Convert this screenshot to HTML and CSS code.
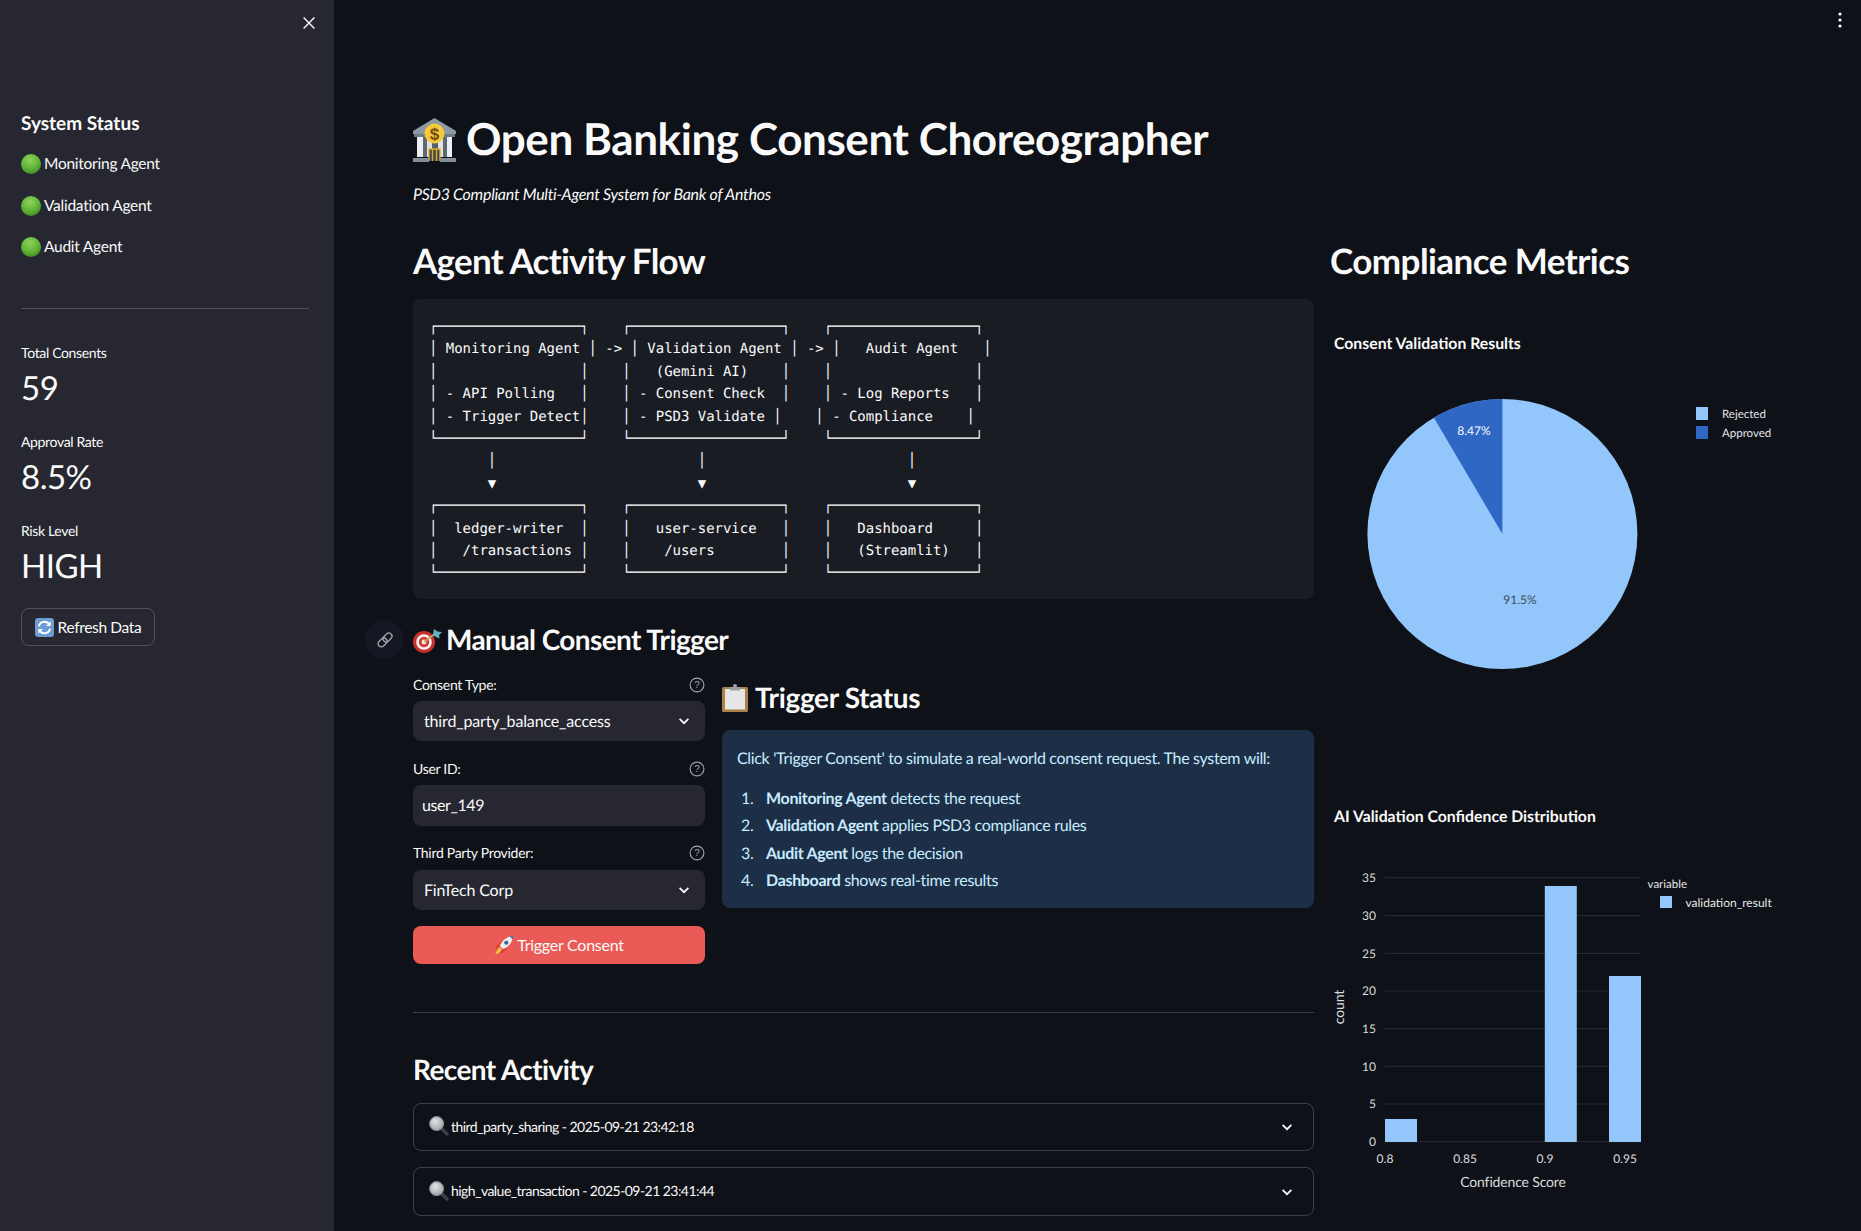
FILE: index.html
```html
<!DOCTYPE html>
<html lang="en">
<head>
  <meta charset="UTF-8">
  <meta name="viewport" content="width=device-width, initial-scale=1.0">
  <link rel="stylesheet" href="styles.css">
  <title>Open Banking Consent Choreographer</title>
</head>
<body>
  <svg class="sprite" aria-hidden="true">
    <defs>
      <radialGradient id="green-shine" cx="45%" cy="30%" r="75%">
        <stop offset="0" stop-color="#8fd45c"/>
        <stop offset="0.6" stop-color="#5fb336"/>
        <stop offset="1" stop-color="#3c8a22"/>
      </radialGradient>
      <radialGradient id="lens-shine" cx="40%" cy="35%" r="70%">
        <stop offset="0" stop-color="#e2e4e6"/>
        <stop offset="1" stop-color="#9a9ea3"/>
      </radialGradient>
      <symbol id="icon-green" viewBox="0 0 20 20">
        <circle cx="10" cy="10" r="10" fill="url(#green-shine)"/>
      </symbol>
      <symbol id="icon-lens" viewBox="0 0 20 20">
        <path d="M12 12l6 6" stroke="#3c4046" stroke-width="3.4" stroke-linecap="round"/>
        <circle cx="7.6" cy="7.6" r="7" fill="url(#lens-shine)" stroke="#8a8e93" stroke-width="1"/>
      </symbol>
      <symbol id="icon-chevron" viewBox="0 0 16 16">
        <path d="M3.6 5.8L8 10.2l4.4-4.4" fill="none" stroke="#fafafa" stroke-width="1.7"/>
      </symbol>
      <symbol id="icon-help" viewBox="0 0 16 16">
        <circle cx="8" cy="8" r="6.9" fill="none" stroke="#a3a5aa" stroke-width="1.1"/>
        <text x="8" y="11.4" text-anchor="middle" class="help-mark">?</text>
      </symbol>
    </defs>
  </svg>

  <div class="app">
    <aside class="sidebar">
      <div class="side-head">
        <svg class="close-icon" viewBox="0 0 20 20"><path d="M4.6 4.6l10.8 10.8M15.4 4.6L4.6 15.4" stroke="#fafafa" stroke-width="1.4" fill="none"/></svg>
      </div>
      <h3 class="side-title">System Status</h3>
      <div class="agent"><svg class="dot"><use href="#icon-green"/></svg><span>Monitoring Agent</span></div>
      <div class="agent"><svg class="dot"><use href="#icon-green"/></svg><span>Validation Agent</span></div>
      <div class="agent"><svg class="dot"><use href="#icon-green"/></svg><span>Audit Agent</span></div>
      <hr class="side-rule">
      <div class="metric first">
        <div class="metric-label">Total Consents</div>
        <div class="metric-value">59</div>
      </div>
      <div class="metric">
        <div class="metric-label">Approval Rate</div>
        <div class="metric-value">8.5%</div>
      </div>
      <div class="metric">
        <div class="metric-label">Risk Level</div>
        <div class="metric-value">HIGH</div>
      </div>
      <button class="refresh">
        <svg class="refresh-icon" viewBox="0 0 20 20">
          <rect width="20" height="20" rx="3.5" fill="#6d9bd3"/>
          <path d="M4 8.6A6.2 6.2 0 0 1 14.6 6" fill="none" stroke="#fff" stroke-width="2"/>
          <path d="M16.6 3.4v5h-5z" fill="#fff"/>
          <path d="M16 11.4A6.2 6.2 0 0 1 5.4 14" fill="none" stroke="#fff" stroke-width="2"/>
          <path d="M3.4 16.6v-5h5z" fill="#fff"/>
        </svg>
        <span>Refresh Data</span>
      </button>
    </aside>

    <main class="main">
      <svg class="menu-dots" viewBox="0 0 6 18"><circle cx="3" cy="3" r="1.6"/><circle cx="3" cy="9" r="1.6"/><circle cx="3" cy="15" r="1.6"/></svg>

      <div class="title-row">
        <svg class="bank-icon" viewBox="0 0 43 44">
          <path d="M21.5 0L43 13v3H0v-3z" fill="#8d9aa3"/>
          <rect x="1" y="16" width="41" height="3" fill="#6f7b84"/>
          <rect x="4" y="19" width="6" height="20" fill="#eceff1"/>
          <rect x="14" y="19" width="5" height="20" fill="#dfe3e6"/>
          <rect x="25" y="19" width="5" height="20" fill="#dfe3e6"/>
          <rect x="34" y="19" width="5" height="20" fill="#eceff1"/>
          <rect x="10" y="19" width="4" height="20" fill="#5d6a73"/>
          <rect x="30" y="19" width="4" height="20" fill="#5d6a73"/>
          <rect x="19" y="19" width="6" height="20" fill="#55616a"/>
          <path d="M16 43V31h11v12M19.5 31v12M23.5 31v12" fill="#3d4850" stroke="#e0ac2e" stroke-width="1.4"/>
          <rect x="0" y="40" width="16" height="4" fill="#838f98"/>
          <rect x="27" y="40" width="16" height="4" fill="#838f98"/>
          <circle cx="21.5" cy="15.5" r="10" fill="#f6c93a"/>
          <text x="21.5" y="21.5" text-anchor="middle" class="bank-mark">$</text>
        </svg>
        <h1>Open Banking Consent Choreographer</h1>
      </div>
      <p class="subtitle"><em>PSD3 Compliant Multi-Agent System for Bank of Anthos</em></p>

      <div class="columns">
        <section class="col-left">
          <h2>Agent Activity Flow</h2>
          <pre class="flow">┌─────────────────┐    ┌──────────────────┐    ┌─────────────────┐
│ Monitoring Agent │ -&gt; │ Validation Agent │ -&gt; │   Audit Agent   │
│                 │    │   (Gemini AI)    │    │                 │
│ - API Polling   │    │ - Consent Check  │    │ - Log Reports   │
│ - Trigger Detect│    │ - PSD3 Validate │    │ - Compliance    │
└─────────────────┘    └──────────────────┘    └─────────────────┘
       │                        │                        │
       ▼                        ▼                        ▼
┌─────────────────┐    ┌──────────────────┐    ┌─────────────────┐
│  ledger-writer  │    │   user-service   │    │   Dashboard     │
│   /transactions │    │    /users        │    │   (Streamlit)   │
└─────────────────┘    └──────────────────┘    └─────────────────┘</pre>

          <div class="section-head">
            <span class="anchor">
              <svg viewBox="0 0 20 20"><g fill="none" stroke="#a3a5aa" stroke-width="1.3" transform="rotate(-45 10 10)"><rect x="1.5" y="6.8" width="10" height="6.4" rx="3.2"/><rect x="8.5" y="6.8" width="10" height="6.4" rx="3.2"/></g></svg>
            </span>
            <svg class="target-icon" viewBox="0 0 29 25">
              <circle cx="11" cy="14" r="11" fill="#c9302c"/>
              <circle cx="11" cy="14" r="7.8" fill="#f4f1ee"/>
              <circle cx="11" cy="14" r="5.2" fill="#d43a35"/>
              <circle cx="11" cy="14" r="2.4" fill="#f4f1ee"/>
              <path d="M11 14L23 5" stroke="#c9a24a" stroke-width="1.6"/>
              <path d="M20 7l1-6 3.5 2.5L29 4l-3 3 .5 3.5-3.5-1.5z" fill="#5fb3c4"/>
            </svg>
            <h3>Manual Consent Trigger</h3>
          </div>

          <div class="trigger-grid">
            <form class="trigger-form">
              <div class="field-label"><label>Consent Type:</label><svg class="help"><use href="#icon-help"/></svg></div>
              <div class="select"><span>third_party_balance_access</span><svg class="chevron"><use href="#icon-chevron"/></svg></div>

              <div class="field-label second"><label>User ID:</label><svg class="help"><use href="#icon-help"/></svg></div>
              <div class="text-input">user_149</div>

              <div class="field-label third"><label>Third Party Provider:</label><svg class="help"><use href="#icon-help"/></svg></div>
              <div class="select"><span>FinTech Corp</span><svg class="chevron"><use href="#icon-chevron"/></svg></div>

              <button type="button" class="primary">
                <svg class="rocket-icon" viewBox="0 0 22 22">
                  <path d="M6 14l-5 1 4-6 4-1z" fill="#d9402f"/>
                  <path d="M8 16l-1 5 6-4 1-4z" fill="#d9402f"/>
                  <path d="M6 13l3 3-5 5-2 0 0-2z" fill="#f6b73c"/>
                  <path d="M6 16l-3 4 4-2z" fill="#f4e04d"/>
                  <path d="M6.5 12C9 6 14 1.5 21 1c-.5 7-5 12-11 14.5z" fill="#e9edf1"/>
                  <path d="M17 1.3c1.5-.3 2.8-.3 4-.3 0 1.2 0 2.5-.3 4z" fill="#4a6fa8"/>
                  <circle cx="13.5" cy="8.5" r="2.3" fill="#3f5f8f"/>
                </svg>
                <span>Trigger Consent</span>
              </button>
            </form>

            <div class="status-col">
              <div class="status-head">
                <svg class="clip-icon" viewBox="0 0 26 28">
                  <rect x="0" y="3" width="26" height="25" rx="1.5" fill="#a9814a"/>
                  <rect x="3" y="5" width="20" height="20.5" fill="#e6e6e6"/>
                  <path d="M8 3h10v3.5H8z" fill="#9aa0a6"/>
                  <circle cx="13" cy="2" r="2" fill="#9aa0a6"/>
                </svg>
                <h3>Trigger Status</h3>
              </div>
              <div class="info-box">
                <p>Click 'Trigger Consent' to simulate a real-world consent request. The system will:</p>
                <ol>
                  <li><strong>Monitoring Agent</strong> detects the request</li>
                  <li><strong>Validation Agent</strong> applies PSD3 compliance rules</li>
                  <li><strong>Audit Agent</strong> logs the decision</li>
                  <li><strong>Dashboard</strong> shows real-time results</li>
                </ol>
              </div>
            </div>
          </div>

          <hr class="main-rule">

          <h3 class="recent-title">Recent Activity</h3>
          <div class="expander">
            <svg class="lens"><use href="#icon-lens"/></svg>
            <span class="expander-text">third_party_sharing - 2025-09-21 23:42:18</span>
            <svg class="chevron"><use href="#icon-chevron"/></svg>
          </div>
          <div class="expander tall">
            <svg class="lens"><use href="#icon-lens"/></svg>
            <span class="expander-text">high_value_transaction - 2025-09-21 23:41:44</span>
            <svg class="chevron"><use href="#icon-chevron"/></svg>
          </div>
        </section>

        <section class="col-right">
          <h2>Compliance Metrics</h2>

          <svg class="chart pie-chart" viewBox="0 0 451 470">
            <text x="4" y="49" class="chart-title">Consent Validation Results</text>
            <circle cx="172.4" cy="234" r="135" fill="#93c6fa"/>
            <path d="M172.4 234V99A135 135 0 0 0 103.9 117.7z" fill="#2f67c5"/>
            <text x="144" y="135" text-anchor="middle" class="pie-label light">8.47%</text>
            <text x="190" y="304" text-anchor="middle" class="pie-label dark">91.5%</text>
            <rect x="366" y="107" width="12" height="13" fill="#93c6fa"/>
            <rect x="366" y="126" width="12" height="13" fill="#2f67c5"/>
            <text x="392" y="118" class="legend">Rejected</text>
            <text x="392" y="137" class="legend">Approved</text>
          </svg>

          <svg class="chart bar-chart" viewBox="0 0 451 441">
            <text x="4" y="32" class="chart-title">AI Validation Confidence Distribution</text>
            <g class="grid">
              <path d="M55 87.7H311M55 125.7H311M55 163.3H311M55 201H311M55 238.7H311M55 276.3H311M55 314H311M55 351.7H311"/>
            </g>
            <rect x="55" y="329" width="32" height="23" fill="#93c6fa"/>
            <rect x="214.8" y="96" width="32" height="256" fill="#93c6fa"/>
            <rect x="279" y="186" width="32" height="166" fill="#93c6fa"/>
            <g class="tick" text-anchor="end">
              <text x="46" y="92">35</text>
              <text x="46" y="130">30</text>
              <text x="46" y="168">25</text>
              <text x="46" y="205">20</text>
              <text x="46" y="243">15</text>
              <text x="46" y="281">10</text>
              <text x="46" y="318">5</text>
              <text x="46" y="356">0</text>
            </g>
            <g class="tick" text-anchor="middle">
              <text x="55" y="373">0.8</text>
              <text x="135" y="373">0.85</text>
              <text x="215" y="373">0.9</text>
              <text x="295" y="373">0.95</text>
            </g>
            <text x="183" y="397" text-anchor="middle" class="axis">Confidence Score</text>
            <text transform="translate(14 217) rotate(-90)" text-anchor="middle" class="axis">count</text>
            <text x="317.6" y="98" class="legend">variable</text>
            <rect x="330" y="106" width="12" height="12" fill="#93c6fa"/>
            <text x="355.5" y="117" class="legend wide">validation_result</text>
          </svg>
        </section>
      </div>
    </main>
  </div>
</body>
</html>
```

FILE: styles.css
```css
* {
  box-sizing: border-box;
}

html, body {
  margin: 0;
  height: 100%;
  overflow: hidden;
}

body {
  background-color: #0e1117;
  color: #fafafa;
  font-family: "Lato", "Noto Sans", sans-serif;
  font-size: 16px;
  text-rendering: geometricPrecision;
}

h1, h2, h3, p {
  margin: 0;
}

.sprite {
  position: absolute;
  width: 0;
  height: 0;
}

.app {
  display: flex;
  height: 1231px;
  overflow: hidden;
}

/* sidebar */
.sidebar {
  flex: 0 0 334px;
  padding: 0 25px 0 21px;
  background-color: #262730;
}

.side-head {
  display: flex;
  justify-content: flex-end;
  align-items: center;
  height: 46px;
  margin-right: -10px;
}

.close-icon {
  width: 20px;
  height: 20px;
}

.side-title {
  margin-top: 64px;
  font-size: 19px;
  line-height: 28px;
  font-weight: 700;
}

.agent {
  display: flex;
  align-items: center;
  gap: 3px;
  height: 24px;
  margin-top: 17.5px;
  font-size: 15.5px;
  letter-spacing: -0.25px;
}

.side-title + .agent {
  margin-top: 14px;
}

.dot {
  width: 20px;
  height: 20px;
}

.side-rule, .main-rule {
  height: 1px;
  margin: 0;
  border: 0;
  background-color: rgba(250, 250, 250, 0.2);
}

.side-rule {
  margin-top: 49px;
}

.metric {
  margin-top: 21px;
}

.metric.first {
  margin-top: 34px;
}

.metric-label {
  font-size: 14px;
  line-height: 20px;
  letter-spacing: -0.35px;
}

.metric-value {
  margin-top: 2px;
  font-size: 33px;
  line-height: 46px;
  letter-spacing: -0.5px;
}

.refresh {
  display: flex;
  align-items: center;
  justify-content: center;
  gap: 4px;
  width: 134px;
  height: 38px;
  margin-top: 19px;
  padding: 0;
  color: #fafafa;
  font-family: inherit;
  font-size: 15.5px;
  letter-spacing: -0.35px;
  background: transparent;
  border: 1px solid rgba(250, 250, 250, 0.2);
  border-radius: 8px;
}

.refresh-icon {
  width: 19px;
  height: 19px;
}

/* main area */
.main {
  position: relative;
  flex: 1;
  padding: 112px 80px 0 79px;
}

.menu-dots {
  position: absolute;
  top: 11px;
  right: 18px;
  width: 6px;
  height: 18px;
  fill: #fafafa;
}

.title-row {
  display: flex;
  align-items: center;
  gap: 10px;
  height: 56px;
}

.bank-icon {
  width: 43px;
  height: 44px;
}

.bank-mark {
  font-family: "Liberation Sans", sans-serif;
  font-size: 17px;
  font-weight: 700;
  fill: #6d4c10;
}

h1 {
  height: 56px;
  font-size: 44px;
  line-height: 54px;
  font-weight: 700;
  letter-spacing: -0.42px;
}

.subtitle {
  margin-top: 15px;
  font-size: 16px;
  line-height: 23px;
  letter-spacing: -0.27px;
}

.columns {
  display: grid;
  grid-template-columns: 901px 451px;
  gap: 16px;
  margin-top: 33px;
}

h2 {
  height: 46px;
  font-size: 35px;
  line-height: 44px;
  font-weight: 700;
  letter-spacing: -0.75px;
}

.col-right h2 {
  letter-spacing: -0.55px;
}

.flow {
  height: 300px;
  margin: 14px 0 0;
  padding: 17px 16px 0;
  font-family: "DejaVu Sans Mono", "Liberation Mono", monospace;
  font-size: 14px;
  line-height: 22.4px;
  letter-spacing: -0.03px;
  color: #fafafa;
  background-color: #1a1c24;
  border-radius: 8px;
}

.section-head {
  position: relative;
  display: flex;
  align-items: center;
  gap: 4px;
  height: 40px;
  margin-top: 21px;
}

.section-head h3, .status-head h3, .recent-title {
  height: 40px;
  font-size: 28px;
  line-height: 38px;
  font-weight: 700;
  letter-spacing: -0.6px;
}

.status-head h3 {
  letter-spacing: -0.35px;
}

.anchor {
  position: absolute;
  left: -48px;
  top: 0;
  display: flex;
  justify-content: center;
  align-items: center;
  width: 39px;
  height: 39px;
  background-color: #141823;
  border-radius: 50%;
}

.anchor svg {
  width: 20px;
  height: 20px;
}

.target-icon {
  width: 29px;
  height: 25px;
}

.trigger-grid {
  display: grid;
  grid-template-columns: 292px 592px;
  gap: 17px;
  margin-top: 15px;
}

.field-label {
  display: flex;
  justify-content: space-between;
  align-items: center;
  height: 20px;
  font-size: 14px;
  letter-spacing: -0.3px;
}

.field-label label {
  padding-bottom: 2px;
}

.field-label.second {
  margin-top: 18px;
}

.field-label.third {
  margin-top: 17px;
}

.help {
  width: 16px;
  height: 16px;
}

.help-mark {
  font-family: "Liberation Sans", sans-serif;
  font-size: 10px;
  fill: #a3a5aa;
}

.select, .text-input {
  display: flex;
  align-items: center;
  margin-top: 6px;
  background-color: #262730;
  border-radius: 8px;
}

.select {
  justify-content: space-between;
  height: 40px;
  padding-left: 11px;
  padding-right: 13px;
  letter-spacing: -0.15px;
}

.text-input {
  height: 41px;
  padding-left: 9px;
  letter-spacing: -0.4px;
}

.chevron {
  width: 16px;
  height: 16px;
}

.field-label.third + .select {
  margin-top: 7px;
}

.primary {
  display: flex;
  justify-content: center;
  align-items: center;
  gap: 3px;
  width: 100%;
  height: 38px;
  margin-top: 16px;
  padding: 0 0 1px;
  color: #fafafa;
  font-family: inherit;
  font-size: 16px;
  letter-spacing: -0.25px;
  background-color: #ea5a57;
  border: 0;
  border-radius: 8px;
}

.rocket-icon {
  width: 20px;
  height: 22px;
}

.status-head {
  display: flex;
  align-items: center;
  gap: 7px;
  height: 40px;
  margin-top: 3px;
}

.clip-icon {
  width: 26px;
  height: 28px;
}

.info-box {
  height: 178px;
  margin-top: 12px;
  padding: 17px 15px 0;
  color: #c7ebff;
  line-height: 24px;
  letter-spacing: -0.33px;
  background-color: #1d2f47;
  border-radius: 8px;
}

.info-box ol {
  margin: 16px 0 0;
  padding: 0 0 0 4px;
  list-style: none;
  counter-reset: step;
}

.info-box li {
  margin-bottom: 3.3px;
  counter-increment: step;
}

.info-box li::before {
  content: counter(step) ".";
  display: inline-block;
  width: 25px;
}

.main-rule {
  margin-top: 48px;
}

.recent-title {
  margin-top: 37px;
}

.expander {
  display: flex;
  align-items: center;
  height: 48px;
  margin-top: 13px;
  padding: 0 18px 0 15px;
  font-size: 14px;
  letter-spacing: -0.55px;
  border: 1px solid rgba(250, 250, 250, 0.2);
  border-radius: 8px;
}

.expander.tall {
  height: 49px;
  margin-top: 16px;
}

.lens {
  width: 20px;
  height: 20px;
  margin-right: 2px;
  transform: translateY(-1px);
}

.expander-text {
  flex: 1;
  padding-bottom: 2px;
}

/* charts */
.chart {
  display: block;
  width: 451px;
}

.pie-chart {
  height: 470px;
  margin-top: 15px;
}

.bar-chart {
  height: 441px;
  margin-top: 20px;
}

.chart-title {
  font-size: 15.8px;
  font-weight: 700;
  fill: #fafafa;
}

.pie-label {
  font-size: 12px;
}

.pie-label.light {
  fill: #fafafa;
}

.pie-label.dark {
  fill: #3f4a58;
}

.legend {
  font-size: 11.5px;
  fill: #e6e6e8;
}

.legend.wide {
  font-size: 12px;
}

.grid path {
  fill: none;
  stroke: #262931;
  stroke-width: 1.2;
}

.tick text {
  font-size: 12px;
  fill: #dcdcde;
}

.axis {
  font-size: 14px;
  letter-spacing: -0.15px;
  fill: #dcdcde;
}
```
